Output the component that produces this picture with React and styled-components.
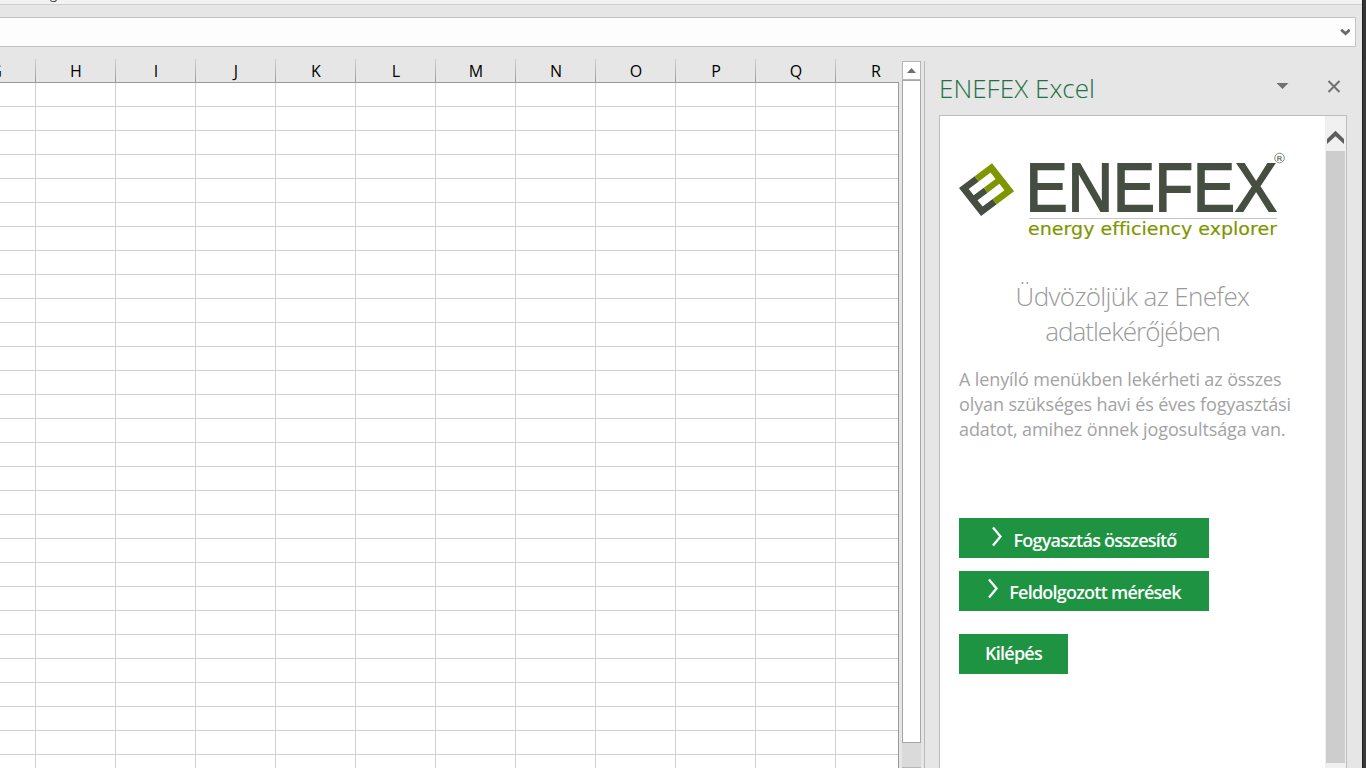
import React from 'react';
import styled, { createGlobalStyle } from 'styled-components';

const Global = createGlobalStyle`
  * { box-sizing: border-box; }
  html, body { margin: 0; padding: 0; overflow: hidden; }
  body { font-family: "Open Sans", "Noto Sans", sans-serif; background: #e6e6e6; }
`;

const Screen = styled.div`
  display: flex;
  width: 1366px;
  height: 768px;
  overflow: hidden;
`;
const Window = styled.div`
  display: flex;
  flex-direction: column;
  width: 1362px;
  background: #e6e6e6;
`;
const Desktop = styled.div`
  width: 4px;
  background: linear-gradient(#343434 60px, #3a3a3a 60px);
  border-left: 1px solid #1f1f1f;
`;
const Ribbon = styled.div`
  height: 5px;
  flex: none;
  overflow: hidden;
  background: #f2f2f2;
  border-bottom: 1px solid #cfcfcf;
`;
const RibbonLabel = styled.div`
  margin: -15px 0 0 50px;
  font-size: 13px;
  line-height: 18px;
  color: #333;
`;
const FormulaBar = styled.div`
  display: flex;
  align-items: center;
  justify-content: flex-end;
  flex: none;
  width: 1356px;
  height: 30px;
  margin-top: 12px;
  padding-right: 5px;
  background: #fdfdfd;
  border: 1px solid #c3c3c3;
  border-left: 0;
`;
const Workspace = styled.div`
  display: flex;
  flex: 1;
  min-height: 0;
`;
const Sheet = styled.div`
  width: 899px;
  padding-top: 12px;
  overflow: hidden;
`;
const HeaderRow = styled.div`
  display: flex;
  height: 24px;
  overflow: hidden;
  border-bottom: 1px solid #999;
  & > :first-child { margin-left: -44px; }
`;
const ColumnHead = styled.div`
  flex: none;
  width: 80px;
  height: 23px;
  padding-left: 1px;
  font-size: 16px;
  line-height: 24px;
  text-align: center;
  color: #000;
  border-right: 1px solid;
  border-image: linear-gradient(#d2d2d2, #979797) 1;
`;
const Cells = styled.div`
  height: 686px;
  overflow: hidden;
  background: #fff;
  border-right: 1px solid #999;
`;
const Row = styled.div`
  display: flex;
  height: 24px;
  overflow: hidden;
  & > :first-child { margin-left: -44px; }
`;
const Cell = styled.div`
  flex: none;
  width: 80px;
  border-right: 1px solid #d2d2d2;
  border-bottom: 1px solid #d2d2d2;
`;
const SheetScroll = styled.div`
  display: flex;
  flex-direction: column;
  width: 19px;
  margin: 14px 0 0 3px;
  background: #dadada;
`;
const ScrollUp = styled.div`
  display: flex;
  align-items: center;
  justify-content: center;
  height: 19px;
  background: #fff;
  border: 1px solid #b5b5b5;
`;
const SheetThumb = styled.div`
  height: 663px;
  background: #fff;
  border: 1px solid #a6a6a6;
`;
const ScrollEnd = styled.div`
  height: 1px;
  margin-top: auto;
  background: #b8b8b8;
`;
const Splitter = styled.div`
  width: 1px;
  margin: 14px 0 0 3px;
  background: #b9b9b9;
`;
const TaskPane = styled.div`
  display: flex;
  flex-direction: column;
  width: 408px;
  margin-left: 14px;
`;
const PaneHeader = styled.div`
  display: flex;
  align-items: center;
  height: 68px;
  padding: 13px 6px 0 0;
`;
const PaneTitle = styled.div`
  flex: 1;
  font-size: 26px;
  font-weight: 300;
  line-height: 36px;
  letter-spacing: 0.05px;
  white-space: nowrap;
  color: #1e7145;
`;
const PaneBody = styled.div`
  display: flex;
  flex: 1;
  min-height: 0;
  background: #fff;
  border: 1px solid #bdbdbd;
  border-bottom: 0;
`;
const Content = styled.div`
  width: 385px;
  padding: 34px 0 0 19px;
`;
const PaneScroll = styled.div`
  display: flex;
  flex-direction: column;
  align-items: center;
  width: 21px;
  padding: 14px 0 5px;
  background: #f0f0f0;
`;
const PaneThumb = styled.div`
  flex: 1;
  width: 19px;
  margin-top: 6px;
  background: #cdcdcd;
`;
const Logo = styled.svg`
  display: block;
`;
const Tagline = styled.text`
  font: 18px "DejaVu Sans", sans-serif;
  font-variant-ligatures: none;
  fill: #7f9600;
`;
const Heading = styled.h1`
  width: 347px;
  margin: 37px 0 0;
  font-size: 26px;
  font-weight: 300;
  line-height: 35px;
  text-align: center;
  white-space: nowrap;
  color: #9a9a9a;
`;
const HeadingLine = styled.span`
  display: block;
  letter-spacing: ${p => p.$spacing}px;
`;
const Intro = styled.p`
  margin: 18px 0 0;
  font-size: 18px;
  line-height: 25px;
  letter-spacing: -0.12px;
  white-space: nowrap;
  color: #a3a3a3;
`;
const Button = styled.button`
  display: flex;
  align-items: flex-start;
  justify-content: center;
  width: ${p => p.$width}px;
  height: 40px;
  margin: ${p => p.$gap}px 0 0;
  padding: ${p => p.$top}px 0 0;
  border: 0;
  background: #1e9442;
  color: #fff;
  font: 600 18px/25px "Open Sans", sans-serif;
  letter-spacing: -0.76px;
  white-space: nowrap;
`;
const Chevron = styled.svg`
  margin: -2px 10px 0 0;
`;

const columns = ['G', 'H', 'I', 'J', 'K', 'L', 'M', 'N', 'O', 'P', 'Q', 'R'];
const rows = Array.from({ length: 29 }, (_, i) => i);

const Arrow = () => (
  <Chevron width="12" height="21" viewBox="0 0 12 21">
    <path d="M2 1.5 L9.5 10.5 L2 19.5" fill="none" stroke="#fff" strokeWidth="2.3" />
  </Chevron>
);

export default function App() {
  return (
    <Screen>
      <Global />
      <Window>
        <Ribbon><RibbonLabel>g</RibbonLabel></Ribbon>
        <FormulaBar>
          <svg width="10" height="8" viewBox="0 0 10 8">
            <path d="M1.2 1.8 L5.5 5.6 L9.8 1.8" fill="none" stroke="#6a6a6a" strokeWidth="2.8" />
          </svg>
        </FormulaBar>
        <Workspace>
          <Sheet>
            <HeaderRow>{columns.map(c => <ColumnHead key={c}>{c}</ColumnHead>)}</HeaderRow>
            <Cells>
              {rows.map(r => <Row key={r}>{columns.map(c => <Cell key={c} />)}</Row>)}
            </Cells>
          </Sheet>
          <SheetScroll>
            <ScrollUp>
              <svg width="9" height="5" viewBox="0 0 9 5"><path d="M4.5 0 L9 5 H0 Z" fill="#6e6e6e" /></svg>
            </ScrollUp>
            <SheetThumb />
            <ScrollEnd />
          </SheetScroll>
          <Splitter />
          <TaskPane>
            <PaneHeader>
              <PaneTitle>ENEFEX Excel</PaneTitle>
              <svg width="64" height="16" viewBox="0 0 64 16">
                <path d="M-0.5 3 H11.5 L5.5 9 Z" fill="#707070" />
                <path d="M51.5 1 L62.5 12 M62.5 1 L51.5 12" stroke="#707070" strokeWidth="2" />
              </svg>
            </PaneHeader>
            <PaneBody>
              <Content>
                <Logo width="330" height="92" viewBox="0 0 330 92">
                  <g transform="matrix(0.8,-0.6,0.62,0.785,0,38)">
                    <path d="M0 0 H19.6 V6.6 H7 V14.7 H19.6 V20.9 H7 V29 H19.6 V35.6 H0 Z" fill="#464e42" />
                    <path d="M19.6 0 H41.3 V35.6 H19.6 V29 H34.3 V20.9 H19.6 V14.7 H34.3 V6.6 H19.6 Z" fill="#7f9600" />
                  </g>
                  <text x="66.8" y="61.3" fontFamily="Liberation Sans, Arial, sans-serif" fontSize="68.5" textLength="251" lengthAdjust="spacingAndGlyphs" fill="#464e42" stroke="#464e42" strokeWidth="1.8">ENEFEX</text>
                  <path d="M70 68.5 H318" stroke="#c4c4c4" />
                  <Tagline x="69" y="85" textLength="249" lengthAdjust="spacingAndGlyphs" stroke="#7f9600" strokeWidth="0.2">energy efficiency explorer</Tagline>
                  <circle cx="320.5" cy="8" r="4.8" fill="none" stroke="#858a82" />
                  <text x="317.8" y="11" fontFamily="Liberation Sans, sans-serif" fontSize="7.5" fontWeight="bold" fill="#6f746c">R</text>
                </Logo>
                <Heading>
                  <HeadingLine $spacing={-0.64}>Üdvözöljük az Enefex</HeadingLine>
                  <HeadingLine $spacing={-0.98}>adatlekérőjében</HeadingLine>
                </Heading>
                <Intro>A lenyíló menükben lekérheti az összes<br />olyan szükséges havi és éves fogyasztási<br />adatot, amihez önnek jogosultsága van.</Intro>
                <Button $width={250} $gap={76} $top={10}><Arrow />Fogyasztás összesítő</Button>
                <Button $width={250} $gap={13} $top={9}><Arrow />Feldolgozott mérések</Button>
                <Button $width={109} $gap={23} $top={7}>Kilépés</Button>
              </Content>
              <PaneScroll>
                <svg width="17" height="15" viewBox="0 0 17 15">
                  <path d="M0 9 L8.5 0.8 L17 9 V14 L8.5 6.2 L0 14 Z" fill="#5e5e5e" />
                </svg>
                <PaneThumb />
              </PaneScroll>
            </PaneBody>
          </TaskPane>
        </Workspace>
      </Window>
      <Desktop />
    </Screen>
  );
}
